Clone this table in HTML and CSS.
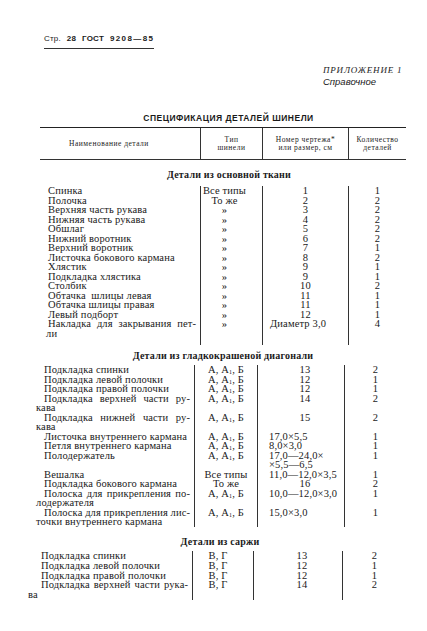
FILE: index.html
```html
<!DOCTYPE html>
<html lang="ru">
<head>
<meta charset="utf-8">
<title>ГОСТ 9208—85, стр. 28</title>
<link rel="stylesheet" href="styles.css">
</head>
<body>
<div class="page">
  <div class="runhead"><span class="pg">Стр.</span> 28 ГОСТ <span class="num">9208—85</span></div>

  <div class="appendix">
    <div class="app-title">ПРИЛОЖЕНИЕ 1</div>
    <div class="app-sub">Справочное</div>
  </div>

  <h1 class="title">СПЕЦИФИКАЦИЯ ДЕТАЛЕЙ ШИНЕЛИ</h1>

  <div class="thead">
    <div class="th th-name">Наименование детали</div>
    <div class="th">Тип<br>шинели</div>
    <div class="th">Номер чертежа*<br>или размер, см</div>
    <div class="th">Количество<br>деталей</div>
  </div>

  <section class="sec s1">
    <h2 class="sec-title">Детали из основной ткани</h2>
    <div class="grid">
      <div class="r"><div class="nm">Спинка</div><div class="tp">Все типы</div><div class="no">1</div><div class="qt">1</div></div>
      <div class="r"><div class="nm">Полочка</div><div class="tp">То же</div><div class="no">2</div><div class="qt">2</div></div>
      <div class="r"><div class="nm">Верхняя часть рукава</div><div class="tp">»</div><div class="no">3</div><div class="qt">2</div></div>
      <div class="r"><div class="nm">Нижняя часть рукава</div><div class="tp">»</div><div class="no">4</div><div class="qt">2</div></div>
      <div class="r"><div class="nm">Обшлаг</div><div class="tp">»</div><div class="no">5</div><div class="qt">2</div></div>
      <div class="r"><div class="nm">Нижний воротник</div><div class="tp">»</div><div class="no">6</div><div class="qt">2</div></div>
      <div class="r"><div class="nm">Верхний воротник</div><div class="tp">»</div><div class="no">7</div><div class="qt">1</div></div>
      <div class="r"><div class="nm">Листочка бокового кармана</div><div class="tp">»</div><div class="no">8</div><div class="qt">2</div></div>
      <div class="r"><div class="nm">Хлястик</div><div class="tp">»</div><div class="no">9</div><div class="qt">1</div></div>
      <div class="r"><div class="nm">Подкладка хлястика</div><div class="tp">»</div><div class="no">9</div><div class="qt">1</div></div>
      <div class="r"><div class="nm">Столбик</div><div class="tp">»</div><div class="no">10</div><div class="qt">2</div></div>
      <div class="r"><div class="nm">Обтачка&nbsp; шлицы левая</div><div class="tp">»</div><div class="no">11</div><div class="qt">1</div></div>
      <div class="r"><div class="nm">Обтачка шлицы правая</div><div class="tp">»</div><div class="no">11</div><div class="qt">1</div></div>
      <div class="r"><div class="nm">Левый подборт</div><div class="tp">»</div><div class="no">12</div><div class="qt">1</div></div>
      <div class="r"><div class="nm"><span class="j">Накладка для закрывания пет-</span>ли</div><div class="tp">»</div><div class="no lt">Диаметр 3,0</div><div class="qt">4</div></div>
      <div class="r sp"><div></div><div></div><div></div><div></div></div>
    </div>
  </section>

  <section class="sec s2">
    <h2 class="sec-title">Детали из гладкокрашеной диагонали</h2>
    <div class="grid">
      <div class="r"><div class="nm">Подкладка спинки</div><div class="tp">А, А<sub>1</sub>, Б</div><div class="no">13</div><div class="qt">2</div></div>
      <div class="r"><div class="nm">Подкладка левой полочки</div><div class="tp">А, А<sub>1</sub>, Б</div><div class="no">12</div><div class="qt">1</div></div>
      <div class="r"><div class="nm">Подкладка правой полочки</div><div class="tp">А, А<sub>1</sub>, Б</div><div class="no">12</div><div class="qt">1</div></div>
      <div class="r"><div class="nm"><span class="j">Подкладка верхней части ру-</span>кава</div><div class="tp">А, А<sub>1</sub>, Б</div><div class="no">14</div><div class="qt">2</div></div>
      <div class="r"><div class="nm"><span class="j">Подкладка нижней части ру-</span>кава</div><div class="tp">А, А<sub>1</sub>, Б</div><div class="no">15</div><div class="qt">2</div></div>
      <div class="r"><div class="nm">Листочка внутреннего кармана</div><div class="tp">А, А<sub>1</sub>, Б</div><div class="no lt">17,0×5,5</div><div class="qt">1</div></div>
      <div class="r"><div class="nm">Петля внутреннего кармана</div><div class="tp">А, А<sub>1</sub>, Б</div><div class="no lt">8,0×3,0</div><div class="qt">1</div></div>
      <div class="r"><div class="nm">Полодержатель</div><div class="tp">А, А<sub>1</sub>, Б</div><div class="no lt">17,0—24,0×<br>×5,5—6,5</div><div class="qt">1</div></div>
      <div class="r"><div class="nm">Вешалка</div><div class="tp">Все типы</div><div class="no lt">11,0—12,0×3,5</div><div class="qt">1</div></div>
      <div class="r"><div class="nm">Подкладка бокового кармана</div><div class="tp">То же</div><div class="no">16</div><div class="qt">2</div></div>
      <div class="r"><div class="nm"><span class="j">Полоска для прикрепления по-</span>лодержателя</div><div class="tp">А, А<sub>1</sub>, Б</div><div class="no lt">10,0—12,0×3,0</div><div class="qt">1</div></div>
      <div class="r"><div class="nm"><span class="j">Полоска для прикрепления лис-</span>точки внутреннего кармана</div><div class="tp">А, А<sub>1</sub>, Б</div><div class="no lt">15,0×3,0</div><div class="qt">1</div></div>
    </div>
  </section>

  <section class="sec s3">
    <h2 class="sec-title">Детали из саржи</h2>
    <div class="grid">
      <div class="r"><div class="nm">Подкладка спинки</div><div class="tp">В, Г</div><div class="no">13</div><div class="qt">2</div></div>
      <div class="r"><div class="nm">Подкладка левой полочки</div><div class="tp">В, Г</div><div class="no">12</div><div class="qt">1</div></div>
      <div class="r"><div class="nm">Подкладка правой полочки</div><div class="tp">В, Г</div><div class="no">12</div><div class="qt">1</div></div>
      <div class="r"><div class="nm"><span class="j">Подкладка верхней части рука-</span>ва</div><div class="tp">В, Г</div><div class="no">14</div><div class="qt">2</div></div>
    </div>
  </section>
</div>
</body>
</html>
```

FILE: styles.css
```css
* { box-sizing: border-box; margin: 0; padding: 0; }
html, body { background: #ffffff; }
body {
  width: 427px;
  height: 631px;
  overflow: hidden;
  font-family: "Liberation Serif", "DejaVu Serif", serif;
  color: #1a1a1a;
}
.page { padding: 34px 21px 0 28px; }

/* running head */
.runhead {
  margin-left: 16px;
  display: block;
  width: fit-content;
  font-family: "Liberation Sans", "DejaVu Sans", sans-serif;
  font-size: 8px;
  line-height: 10px;
  font-weight: bold;
  word-spacing: 3.5px;
  letter-spacing: 0.2px;
  border-bottom: 1.2px solid #333;
  padding-bottom: 4px;
}
.runhead .pg { font-weight: normal; }
.runhead .num { letter-spacing: 1.4px; }

/* appendix mark */
.appendix { margin: 15.5px 0 0 295px; }
.app-title {
  font-style: italic;
  font-size: 9px;
  letter-spacing: 0.8px;
  line-height: 11px;
  white-space: nowrap;
}
.app-sub {
  font-family: "Liberation Sans", "DejaVu Sans", sans-serif;
  font-style: italic;
  font-size: 9.5px;
  line-height: 12px;
}

/* title */
.title {
  margin: 25.5px 0 0 12px;
  padding-left: 11px;
  text-align: center;
  font-family: "Liberation Sans", "DejaVu Sans", sans-serif;
  font-weight: bold;
  font-size: 8.5px;
  line-height: 10px;
  letter-spacing: 0.5px;
}

/* table head */
.thead {
  margin: 4px 0 0 12px;
  display: grid;
  grid-template-columns: 160px 62px 86px 1fr;
  height: 33px;
  border-top: 1.5px solid #222;
  border-bottom: 1.2px solid #333;
}
.th {
  display: flex;
  align-items: center;
  justify-content: center;
  text-align: center;
  font-size: 7.5px;
  line-height: 8px;
  letter-spacing: 0.5px;
}
.th + .th { border-left: 1px solid #333; }
.th-name { padding-right: 22px; }

/* sections */
.sec-title {
  margin-left: 12px;
  text-align: center;
  font-size: 10px;
  line-height: 10px;
  font-weight: bold;
  letter-spacing: 0.2px;
}
.s1 .sec-title { margin-top: 10px; padding-left: 12px; }
.s2 .sec-title { margin-top: 6px; }
.s3 .sec-title { margin-top: 10.5px; padding-right: 6px; }

.grid {
  display: grid;
  font-size: 10.5px;
  letter-spacing: 0.15px;
  --lh: 9.5px;
  --pl: 0px;
  --ti: 0px;
}
.s1 .grid { margin-top: 6px; grid-template-columns: 172px 62px 86px 1fr; --pl: 18px; --ti: 2px; }
.s2 .grid { margin-top: 4px; grid-template-columns: 166px 63px 87px 1fr; --pl: 8px; --ti: 8px; }
.s3 .grid { margin-top: 4px; grid-template-columns: 164px 61px 89px 1fr; --lh: 9.75px; --pl: 0px; --ti: 13px; }

.r { display: contents; }
.r > div { line-height: var(--lh); }
.r > div + div { border-left: 1px solid #333; }
.sp > div { height: 7px; }

.nm {
  padding: 0 4px 0 var(--pl);
  text-indent: var(--ti);
  text-align: left;
}
.j { display: block; text-align: justify; text-align-last: justify; white-space: nowrap; letter-spacing: 0.1px; }
.tp, .no, .qt { text-align: center; white-space: nowrap; }
.s1 .tp { padding-right: 14px; }
.s3 .tp { padding-right: 10px; }
.s2 .no, .s3 .no { padding-left: 8px; }
.no.lt { text-align: left; padding-left: 7px; }
.s2 .no.lt { padding-left: 11px; }
sub { font-size: 6px; line-height: 0; vertical-align: -1px; }
```
